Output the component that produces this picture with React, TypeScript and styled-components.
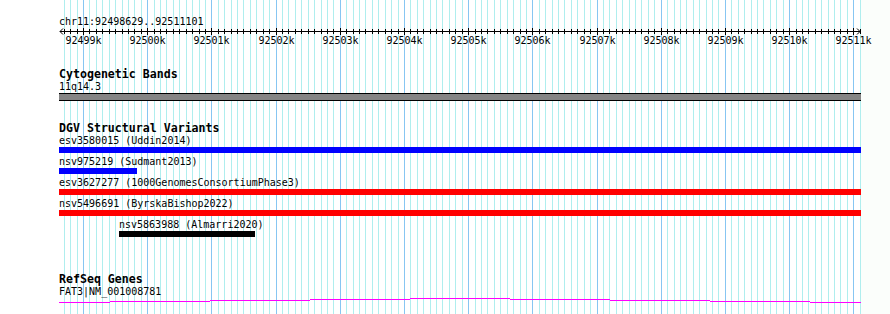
import styled, { createGlobalStyle } from 'styled-components'

const START = 92498629
const END = 92511101
const X0 = 59.2
const SCALE = 0.06419
const PANEL_W = 861
const PANEL_H = 314

const MINOR = '#afeeee'
const MAJOR = '#87c6f2'
const MONO = '"DejaVu Sans Mono", "Liberation Mono", monospace'

const toX = (bp: number) => X0 + (bp - START) * SCALE

const GlobalStyle = createGlobalStyle`
  body {
    margin: 0;
    background: #fbfefb;
    font-family: ${MONO};
  }
`

const Page = styled.div`
  width: 890px;
  height: 314px;
  display: flex;
  overflow: hidden;
`

const Panel = styled.div`
  position: relative;
  flex: 0 0 ${PANEL_W}px;
  height: ${PANEL_H}px;
  background: #fff;
`

const GridLayer = styled.svg`
  position: absolute;
  left: 0;
  top: 0;
`

const Tracks = styled.div`
  position: relative;
  display: flex;
  flex-direction: column;
`

const RulerLabel = styled.div`
  margin-top: 15px;
  padding-left: 59px;
  font-size: 10px;
  line-height: 13px;
  color: #000;
`

const Axis = styled.svg`
  display: block;
  overflow: visible;
  text {
    font-family: ${MONO};
    font-size: 10px;
    fill: #000;
  }
`

const Track = styled.section<{ gap: number }>`
  margin-top: ${p => p.gap}px;
  display: flex;
  flex-direction: column;
`

const TrackTitle = styled.h3`
  margin: 0;
  padding-left: 59px;
  font-size: 11.6px;
  font-weight: bold;
  line-height: 12px;
  color: #000;
`

const FeatureLabel = styled.div`
  font-size: 10px;
  line-height: 13px;
  color: #000;
  white-space: nowrap;
`

const Band = styled.div`
  margin-left: 59px;
  width: ${PANEL_W - 59}px;
  height: 8px;
  box-sizing: border-box;
  background: #858585;
  border-top: 1px solid #000;
  border-bottom: 1px solid #000;
`

const Row = styled.div`
  display: flex;
  flex-direction: column;
  margin-bottom: 2px;
`

const Bar = styled.div<{ color: string }>`
  height: 6px;
  background: ${p => p.color};
`

const GeneLine = styled.svg`
  display: block;
`

type Feature = { name: string; source: string; start: number; end: number; color: string }

const variants: Feature[] = [
  { name: 'esv3580015', source: 'Uddin2014', start: 92490000, end: 92520000, color: '#0000ff' },
  { name: 'nsv975219', source: 'Sudmant2013', start: 92490000, end: 92499836, color: '#0000ff' },
  { name: 'esv3627277', source: '1000GenomesConsortiumPhase3', start: 92490000, end: 92520000, color: '#ff0000' },
  { name: 'nsv5496691', source: 'ByrskaBishop2022', start: 92490000, end: 92520000, color: '#ff0000' },
  { name: 'nsv5863988', source: 'Almarri2020', start: 92499555, end: 92501673, color: '#000000' },
]

const clampX = (x: number) => Math.max(59, Math.min(PANEL_W, x))

function Grid() {
  const lines = []
  for (let bp = 92498700; bp <= END; bp += 100) {
    const x = Math.round(toX(bp)) + 0.5
    lines.push(
      <line key={bp} x1={x} x2={x} y1={0} y2={PANEL_H} stroke={bp % 1000 === 0 ? MAJOR : MINOR} strokeWidth={1} />
    )
  }
  return (
    <GridLayer width={PANEL_W} height={PANEL_H} shapeRendering="crispEdges">
      {lines}
    </GridLayer>
  )
}

function Ruler() {
  const ticks = []
  const labels = []
  for (let bp = 92498700; bp <= END; bp += 100) {
    const x = Math.round(toX(bp)) + 0.5
    const major = bp % 1000 === 0
    ticks.push(<line key={bp} x1={x} x2={x} y1={major ? 0 : 1} y2={major ? 7 : 6} stroke="#000" />)
    if (major) {
      labels.push(
        <text key={'l' + bp} x={x} y={15.5} textAnchor="middle">{bp / 1000}k</text>
      )
    }
  }
  return (
    <Axis width={PANEL_W} height={20}>
      <g shapeRendering="crispEdges">
        <line x1={60} x2={860} y1={3.5} y2={3.5} stroke="#000" />
        {ticks}
      </g>
      <polyline points="63,0.5 60,3.5 63,6.5" fill="none" stroke="#000" />
      <polyline points="857,0.5 860,3.5 857,6.5" fill="none" stroke="#000" />
      {labels}
    </Axis>
  )
}

function VariantRow({ f }: { f: Feature }) {
  const left = clampX(toX(f.start))
  const right = clampX(toX(f.end))
  return (
    <Row>
      <FeatureLabel style={{ paddingLeft: Math.round(left) }}>
        {f.name} ({f.source})
      </FeatureLabel>
      <Bar color={f.color} style={{ marginLeft: Math.round(left), width: Math.round(right - left) }} />
    </Row>
  )
}

// intron connector of FAT3, drawn as a shallow hat across the view
const geneSteps: [number, number, number][] = [
  [59, 110, 4], [110, 210, 3], [210, 310, 2], [310, 410, 1], [410, 510, 0],
  [510, 610, 1], [610, 710, 2], [710, 810, 3], [810, 861, 4],
]

export default function App() {
  return (
    <>
      <GlobalStyle />
      <Page>
        <Panel>
          <Grid />
          <Tracks>
            <RulerLabel>chr11:92498629..92511101</RulerLabel>
            <Ruler />

            <Track gap={20}>
              <TrackTitle>Cytogenetic Bands</TrackTitle>
              <FeatureLabel style={{ paddingLeft: 59 }}>11q14.3</FeatureLabel>
              <Band />
            </Track>

            <Track gap={21}>
              <TrackTitle>DGV Structural Variants</TrackTitle>
              {variants.map(f => <VariantRow key={f.name} f={f} />)}
            </Track>

            <Track gap={34}>
              <TrackTitle>RefSeq Genes</TrackTitle>
              <FeatureLabel style={{ paddingLeft: 59 }}>FAT3|NM_001008781</FeatureLabel>
              <GeneLine width={PANEL_W} height={6} shapeRendering="crispEdges">
                {geneSteps.map(([a, b, y]) => (
                  <line key={a} x1={a} x2={b} y1={y + 0.5} y2={y + 0.5} stroke="#ff00ff" />
                ))}
              </GeneLine>
            </Track>
          </Tracks>
        </Panel>
      </Page>
    </>
  )
}
